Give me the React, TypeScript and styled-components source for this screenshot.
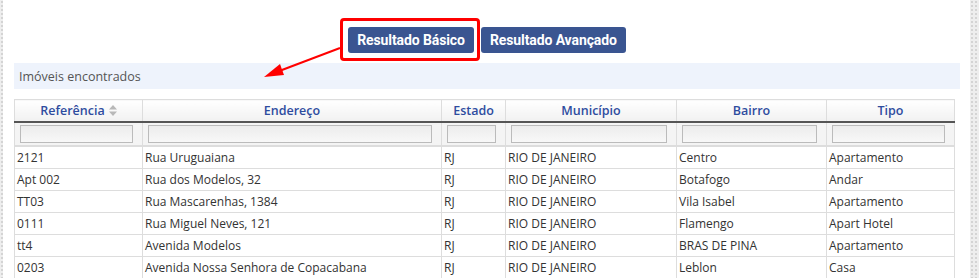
import React from 'react';
import styled, {createGlobalStyle} from 'styled-components';

const GlobalStyle = createGlobalStyle`
    body {
        margin: 0;
        background: #fff;
    }
`;

const Page = styled.div`
    display: grid;
    grid-template-columns: 3px 1fr 9px;
    min-height: 278px;
    overflow: hidden;
`;

const DottedStrip = styled.div`
    background-color: #eeeeee;
    background-image: radial-gradient(#d4d4d4 1px, transparent 1px);
    background-size: 4px 4px;
`;

const Content = styled.div`
    position: relative;
    background: #fff;
    padding: 27px 10px 0 11px;
`;

const ButtonRow = styled.div`
    display: flex;
    justify-content: center;
    gap: 7px;
    height: 26px;
`;

const ButtonWrap = styled.div`
    position: relative;
`;

const Highlight = styled.div`
    position: absolute;
    left: -8px;
    top: -9px;
    right: -6px;
    bottom: -8px;
    border: 3px solid #ff0000;
    border-radius: 4px;
    pointer-events: none;
`;

const ResultButton = styled.button`
    height: 26px;
    padding: 0 9px;
    border: none;
    border-radius: 3px;
    background: #3a5591;
    color: #fff;
    font-family: Roboto, "Liberation Sans", sans-serif;
    font-weight: 700;
    font-size: 14px;
    letter-spacing: -0.1px;
`;

const Arrow = styled.svg`
    position: absolute;
    left: 255px;
    top: 40px;
    overflow: visible;
`;

const SectionTitle = styled.div`
    margin-top: 10px;
    height: 26px;
    width: 946px;
    background: #eef3fc;
    display: flex;
    align-items: center;
    padding-left: 5px;
    box-sizing: border-box;
    font-family: "Open Sans", sans-serif;
    font-size: 12.5px;
    color: #555;
`;

const Table = styled.table`
    margin-top: 10px;
    width: 940px;
    border-collapse: collapse;
    table-layout: fixed;
    font-family: "Open Sans", sans-serif;
    font-size: 12px;
`;

const HeadCell = styled.th`
    height: 21px;
    padding: 0;
    border: 1px solid #dddddd;
    border-bottom: 2px solid #555;
    background: linear-gradient(#ffffff, #f1f1f1);
    color: #2e4c9f;
    font-weight: 600;
    font-size: 12.5px;
    text-align: center;
    white-space: nowrap;
`;

const SortIcon = styled.svg`
    margin-left: 4px;
    vertical-align: -1px;
`;

const FilterCell = styled.td`
    height: 22px;
    padding: 0 9px 0 5px;
    border-left: 1px solid #dddddd;
    border-right: 1px solid #dddddd;
    border-bottom: 2px solid #dddddd;
    background: #f4f4f4;
`;

const FilterInput = styled.input`
    display: block;
    width: 100%;
    height: 18px;
    box-sizing: border-box;
    border: 1px solid #bbbbbb;
    background: linear-gradient(#ececec, #f8f8f8);
`;

const Cell = styled.td`
    height: 21px;
    padding: 0 2px;
    border: 1px solid #dddddd;
    color: #333;
    white-space: nowrap;
    overflow: hidden;
`;

const columns = [
    {title: 'Referência', width: 128, sort: true},
    {title: 'Endereço', width: 299},
    {title: 'Estado', width: 64},
    {title: 'Município', width: 171},
    {title: 'Bairro', width: 150},
    {title: 'Tipo', width: 128},
];

const rows = [
    ['2121', 'Rua Uruguaiana', 'RJ', 'RIO DE JANEIRO', 'Centro', 'Apartamento'],
    ['Apt 002', 'Rua dos Modelos, 32', 'RJ', 'RIO DE JANEIRO', 'Botafogo', 'Andar'],
    ['TT03', 'Rua Mascarenhas, 1384', 'RJ', 'RIO DE JANEIRO', 'Vila Isabel', 'Apartamento'],
    ['0111', 'Rua Miguel Neves, 121', 'RJ', 'RIO DE JANEIRO', 'Flamengo', 'Apart Hotel'],
    ['tt4', 'Avenida Modelos', 'RJ', 'RIO DE JANEIRO', 'BRAS DE PINA', 'Apartamento'],
    ['0203', 'Avenida Nossa Senhora de Copacabana', 'RJ', 'RIO DE JANEIRO', 'Leblon', 'Casa'],
];

function App() {
    return (
        <Page>
            <GlobalStyle/>
            <DottedStrip/>
            <Content>
                <ButtonRow>
                    <ButtonWrap>
                        <ResultButton>Resultado Básico</ResultButton>
                        <Highlight/>
                    </ButtonWrap>
                    <ResultButton>Resultado Avançado</ResultButton>
                </ButtonRow>
                <Arrow width="90" height="40" viewBox="0 0 90 40">
                    <line x1="82" y1="8" x2="16" y2="33" stroke="#ff0000" strokeWidth="2"/>
                    <polygon points="6,37 22,24 26,35" fill="#ff0000"/>
                </Arrow>
                <SectionTitle>Imóveis encontrados</SectionTitle>
                <Table>
                    <colgroup>
                        {columns.map(c => <col key={c.title} style={{width: c.width}}/>)}
                    </colgroup>
                    <thead>
                        <tr>
                            {columns.map(c =>
                                <HeadCell key={c.title}>
                                    {c.title}
                                    {c.sort &&
                                        <SortIcon width="8" height="11" viewBox="0 0 8 11">
                                            <polygon points="0,4.5 4,0 8,4.5" fill="#b8b8b8"/>
                                            <polygon points="0,6.5 4,11 8,6.5" fill="#b8b8b8"/>
                                        </SortIcon>}
                                </HeadCell>)}
                        </tr>
                        <tr>
                            {columns.map(c =>
                                <FilterCell key={c.title}><FilterInput/></FilterCell>)}
                        </tr>
                    </thead>
                    <tbody>
                        {rows.map(r =>
                            <tr key={r[0]}>
                                {r.map((v, i) => <Cell key={i}>{v}</Cell>)}
                            </tr>)}
                    </tbody>
                </Table>
            </Content>
            <DottedStrip/>
        </Page>
    );
}

export default App;
